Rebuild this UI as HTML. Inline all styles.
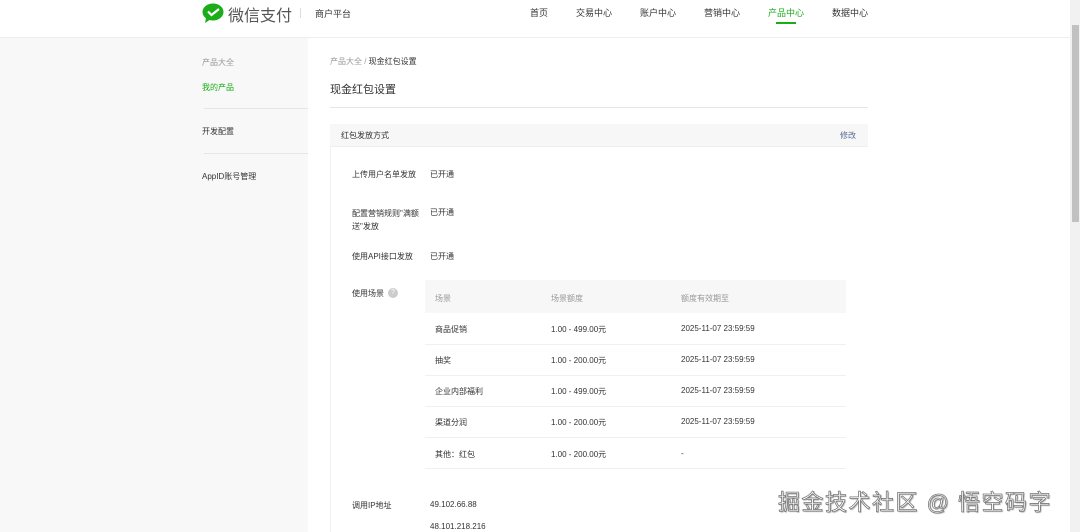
<!DOCTYPE html>
<html><head><meta charset="utf-8"><style>
*{margin:0;padding:0;box-sizing:border-box}
body{width:1080px;height:532px;overflow:hidden;background:#fff;font-family:"Liberation Sans","Noto Sans CJK SC",sans-serif;color:#333;position:relative;font-size:8px}
.hdr{position:absolute;left:0;top:0;width:1070px;height:38px;background:#fff;border-bottom:1px solid #eee}
.side{position:absolute;left:0;top:38px;width:308px;height:494px;background:#f8f8f8}
.a{position:absolute;white-space:nowrap}
.nav{top:6px;font-size:9px;color:#333}
.line{position:absolute;height:1px;background:#e6e6e6}
.row{font-size:8px;color:#333}
.th{font-size:8px;color:#999}
</style></head><body>
<div class="hdr"></div>
<svg class="a" style="left:202px;top:3px" width="22" height="20" viewBox="0 0 22 20"><ellipse cx="11" cy="9" rx="10.5" ry="8.5" fill="#1aad19"/><path d="M4 15 L3 20 L9 16Z" fill="#1aad19"/><path d="M6 8.5 L9.5 12 L17 6" stroke="#fff" stroke-width="2.2" fill="none"/></svg>
<div class="a" style="left:228px;top:2px;font-size:16px;color:#555">微信支付</div>
<div class="a" style="left:300px;top:8px;width:1px;height:10px;background:#ddd"></div>
<div class="a" style="left:315px;top:7px;font-size:9px">商户平台</div>
<div class="a nav" style="left:530px">首页</div>
<div class="a nav" style="left:576px">交易中心</div>
<div class="a nav" style="left:640px">账户中心</div>
<div class="a nav" style="left:704px">营销中心</div>
<div class="a nav" style="left:768px;color:#1aad19">产品中心</div>
<div class="a" style="left:776px;top:22px;width:20px;height:2px;background:#1aad19"></div>
<div class="a nav" style="left:832px">数据中心</div>
<div class="side"></div>
<div class="a" style="left:202px;top:57px;font-size:8px;color:#999">产品大全</div>
<div class="a" style="left:202px;top:82px;font-size:8px;color:#1aad19">我的产品</div>
<div class="line" style="left:204px;top:108px;width:104px"></div>
<div class="a" style="left:202px;top:126px;font-size:8px">开发配置</div>
<div class="line" style="left:204px;top:153px;width:104px"></div>
<div class="a" style="left:202px;top:171px;font-size:8px">AppID账号管理</div>
<div class="a" style="left:330px;top:56px;font-size:8px;color:#999">产品大全 / <span style="color:#333">现金红包设置</span></div>
<div class="a" style="left:330px;top:81px;font-size:11px;color:#333">现金红包设置</div>
<div class="line" style="left:330px;top:107px;width:538px"></div>
<div class="a" style="left:330px;top:124px;width:538px;height:23px;background:#f7f7f7;border-bottom:1px solid #eee"></div>
<div class="a" style="left:330px;top:147px;width:1px;height:385px;background:#f2f2f2"></div>
<div class="a" style="left:341px;top:130px;font-size:8px">红包发放方式</div>
<div class="a" style="left:840px;top:130px;font-size:8px;color:#576b95">修改</div>
<div class="a row" style="left:352px;top:169px">上传用户名单发放</div><div class="a row" style="left:430px;top:169px">已开通</div>
<div class="a row" style="left:352px;top:207px;line-height:13px">配置营销规则"满额<br>送"发放</div><div class="a row" style="left:430px;top:207px">已开通</div>
<div class="a row" style="left:352px;top:251px">使用API接口发放</div><div class="a row" style="left:430px;top:251px">已开通</div>
<div class="a row" style="left:352px;top:288px">使用场景</div>
<div class="a" style="left:388px;top:288px;width:10px;height:10px;border-radius:50%;background:#ccc;color:#fff;font-size:7px;text-align:center;line-height:10px">?</div>
<div class="a" style="left:425px;top:280px;width:421px;height:33px;background:#f7f7f7"></div>
<div class="a th" style="left:435px;top:293px">场景</div>
<div class="a th" style="left:551px;top:293px">场景额度</div>
<div class="a th" style="left:681px;top:293px">额度有效期至</div>
<div class="a row" style="left:435px;top:324px">商品促销</div><div class="a row" style="left:551px;top:324px">1.00 - 499.00元</div><div class="a row" style="left:681px;top:324px">2025-11-07 23:59:59</div>
<div class="line" style="left:425px;top:344px;width:421px;background:#f0f0f0"></div>
<div class="a row" style="left:435px;top:355px">抽奖</div><div class="a row" style="left:551px;top:355px">1.00 - 200.00元</div><div class="a row" style="left:681px;top:355px">2025-11-07 23:59:59</div>
<div class="line" style="left:425px;top:375px;width:421px;background:#f0f0f0"></div>
<div class="a row" style="left:435px;top:386px">企业内部福利</div><div class="a row" style="left:551px;top:386px">1.00 - 499.00元</div><div class="a row" style="left:681px;top:386px">2025-11-07 23:59:59</div>
<div class="line" style="left:425px;top:406px;width:421px;background:#f0f0f0"></div>
<div class="a row" style="left:435px;top:417px">渠道分润</div><div class="a row" style="left:551px;top:417px">1.00 - 200.00元</div><div class="a row" style="left:681px;top:417px">2025-11-07 23:59:59</div>
<div class="line" style="left:425px;top:437px;width:421px;background:#f0f0f0"></div>
<div class="a row" style="left:435px;top:449px">其他：红包</div><div class="a row" style="left:551px;top:449px">1.00 - 200.00元</div><div class="a row" style="left:681px;top:449px">-</div>
<div class="line" style="left:425px;top:468px;width:421px;background:#f0f0f0"></div>
<div class="a row" style="left:352px;top:500px">调用IP地址</div>
<div class="a row" style="left:430px;top:500px">49.102.66.88</div>
<div class="a row" style="left:430px;top:522px">48.101.218.216</div>
<div class="a" style="left:1070px;top:0;width:10px;height:532px;background:#f1f1f1"></div>
<div class="a" style="left:1072px;top:25px;width:7px;height:197px;background:#c1c1c1"></div>
<div class="a" style="left:778px;top:485px;font-size:22px;color:#fff;-webkit-text-stroke:0.8px #777;text-shadow:1px 1px 1px #aaa;letter-spacing:1.5px">掘金技术社区 @ 悟空码字</div>
</body></html>
